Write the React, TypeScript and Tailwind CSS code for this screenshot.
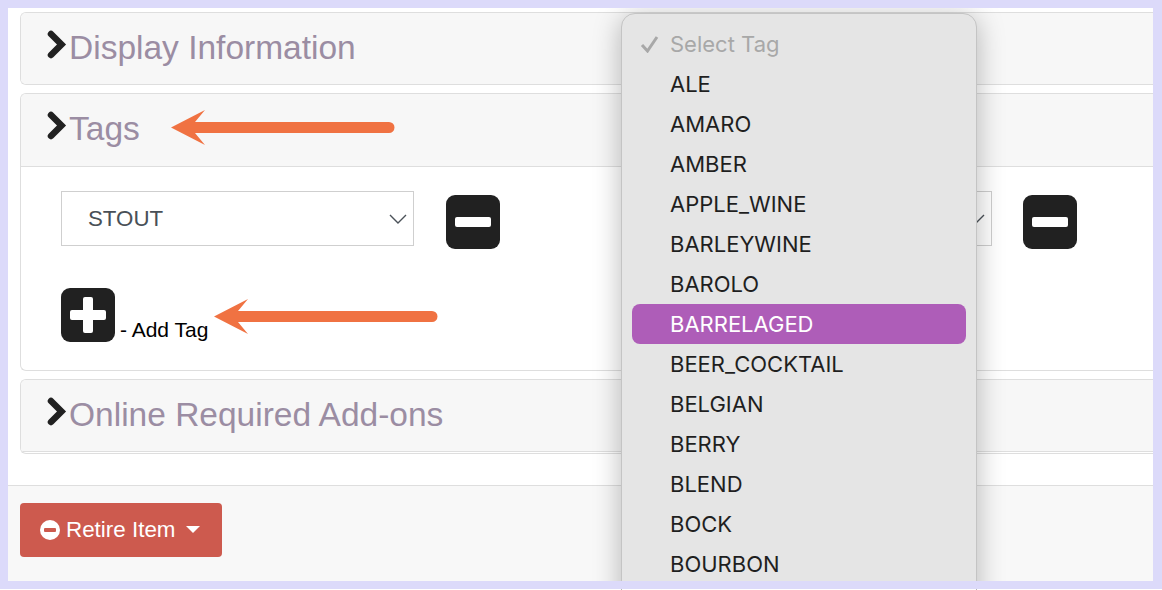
import React from 'react';

const TAGS = [
    'ALE', 'AMARO', 'AMBER', 'APPLE_WINE', 'BARLEYWINE', 'BAROLO', 'BARRELAGED',
    'BEER_COCKTAIL', 'BELGIAN', 'BERRY', 'BLEND', 'BOCK', 'BOURBON',
];

const Chevron = () => (
    <svg width="23" height="32" viewBox="0 0 23 32" className="shrink-0">
        <path d="M5 5 L15.5 15.5 L5 26" fill="none" stroke="#212121" strokeWidth="6.5" strokeLinejoin="miter" strokeLinecap="round" />
    </svg>
);

const SelectArrow = () => (
    <svg width="18" height="10" viewBox="0 0 18 10" fill="none" stroke="#4b5259" strokeWidth="1.4">
        <path d="M1 1 L9 9 L17 1" />
    </svg>
);

const SquareButton = ({ plus }: { plus?: boolean }) => (
    <svg width="54" height="54" viewBox="0 0 54 54" className="shrink-0">
        <rect width="54" height="54" rx="9" fill="#212121" />
        <rect x="9" y="22" width="36" height="10" rx="2" fill="#fff" />
        {plus && <rect x="22" y="9" width="10" height="36" rx="2" fill="#fff" />}
    </svg>
);

const Arrow = ({ className }: { className: string }) => (
    <svg width="224" height="36" viewBox="0 0 224 36" className={className}>
        <path d="M0 17.5 L34 0 L24 12 L218 12 A5.5 5.5 0 0 1 218 23 L24 23 L34 35 Z" fill="#f07242" />
    </svg>
);

const PanelHeader = ({ title, className }: { title: string; className: string }) => (
    <div className={`flex items-start bg-[#f7f7f7] pl-[25px] ${className}`}>
        <Chevron />
        <span className="mt-[2px] text-[33.5px] leading-none text-[#9b8da3]">{title}</span>
    </div>
);

const TagSelect = ({ value, className }: { value: string; className: string }) => (
    <div className={`flex h-[55px] items-center justify-between border border-[#cfcfcf] bg-white pl-[26px] pr-[6px] ${className}`}>
        <span className="text-[22.3px] text-[#495057]">{value}</span>
        <SelectArrow />
    </div>
);

export default function App() {
    return (
        <div className="relative h-screen w-screen overflow-hidden bg-[#dcdafa] pt-2 pr-[9px] pb-[9px] pl-2 font-['Liberation_Sans',Arial,sans-serif]">
            <div className="relative flex h-full flex-col overflow-hidden bg-white">
                <div className="-mr-5 flex h-[477px] shrink-0 flex-col gap-2 pt-1 pl-3">
                    <div className="overflow-hidden rounded-l-md border border-r-0 border-[#dedede]">
                        <PanelHeader title="Display Information" className="h-[71px] pt-4" />
                    </div>

                    <div className="h-[278px] overflow-hidden rounded-l-md border border-r-0 border-[#dedede]">
                        <PanelHeader title="Tags" className="h-[73px] border-b border-[#dedede] pt-4" />
                        <div className="pt-6 pl-10">
                            <div className="flex items-start">
                                <TagSelect value="STOUT" className="w-[353px]" />
                                <div className="mt-1 ml-8">
                                    <SquareButton />
                                </div>
                                <TagSelect value="" className="ml-[140px] w-[352px]" />
                                <div className="mt-1 ml-[31px]">
                                    <SquareButton />
                                </div>
                            </div>
                            <div className="mt-[39px] flex items-end">
                                <SquareButton plus />
                                <span className="mb-[2px] ml-[5px] text-[21px] leading-none text-black">- Add Tag</span>
                            </div>
                        </div>
                    </div>

                    <div className="h-[75px] overflow-hidden rounded-l-md border border-r-0 border-[#dedede]">
                        <PanelHeader title="Online Required Add-ons" className="h-[72px] border-b border-[#dedede] pt-4" />
                    </div>
                </div>

                <div className="flex-1 border-t border-[#dedede] bg-[#f8f8f8] pt-[17px] pl-3">
                    <button className="flex h-[54px] w-[202px] items-center rounded bg-[#cd5a4e] pb-[1px] pl-5 text-[22.4px] text-white">
                        <svg width="20" height="20" viewBox="0 0 20 20" className="mr-[6px]">
                            <circle cx="10" cy="10" r="10" fill="#fff" />
                            <rect x="4" y="8" width="12" height="4" rx="1" fill="#cd5a4e" />
                        </svg>
                        Retire Item
                        <svg width="14" height="8" viewBox="0 0 14 8" className="ml-[10px]">
                            <path d="M0 0 H14 L7 7 Z" fill="#fff" />
                        </svg>
                    </button>
                </div>

                {/* annotation arrows over the panels */}
                <Arrow className="absolute top-[102px] left-[163px]" />
                <Arrow className="absolute top-[291px] left-[206px]" />

                {/* native select menu, open */}
                <div className="absolute top-[5px] left-[613px] h-[640px] w-[356px] rounded-[14px] border border-[#c4c4c4] bg-[#e5e5e5] px-[10px] pt-[10px] font-['Inter',sans-serif] text-[22px] shadow-[0_4px_28px_rgba(0,0,0,0.28)]">
                    <div className="relative flex h-10 items-center pl-[38px] text-[#a8a8a8]">
                        <svg width="20" height="18" viewBox="0 0 20 18" className="absolute left-[8px]">
                            <path d="M2 10 L7.5 16 L17 2" fill="none" stroke="#a8a8a8" strokeWidth="3" />
                        </svg>
                        Select Tag
                    </div>
                    {TAGS.map((tag) => (
                        <div
                            key={tag}
                            className={tag === 'BARRELAGED'
                                ? 'flex h-10 items-center rounded-lg bg-[#ae5db8] pl-[38px] text-white'
                                : 'flex h-10 items-center pl-[38px] text-[#1f1f1f]'}
                        >
                            {tag}
                        </div>
                    ))}
                </div>
            </div>

            {/* last pixel row of the capture, the menu shows through it */}
            <div className="absolute bottom-0 left-0 h-px w-full bg-white">
                <div className="absolute left-[621px] h-px w-[356px] border-x border-[#b5b5b5]" />
            </div>
        </div>
    );
}
